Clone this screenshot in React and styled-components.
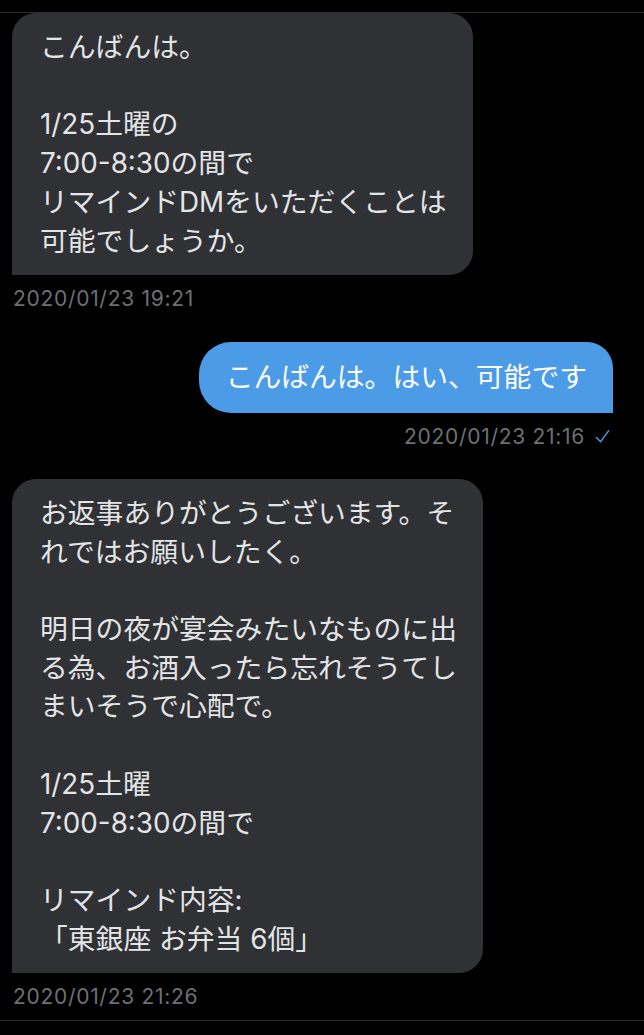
import styled, { createGlobalStyle } from 'styled-components';

const GlobalStyle = createGlobalStyle`
  html, body {
    margin: 0;
    background: #000;
  }
  body {
    font-family: Inter, "Noto Sans CJK JP", "Noto Sans", sans-serif;
  }
`;

const Page = styled.main`
  width: 644px;
  min-height: 1035px;
  background: #000;
`;

const TopBar = styled.header`
  height: 12px;
  border-bottom: 1px solid #2e2e30;
`;

const Thread = styled.section`
  display: flex;
  flex-direction: column;
  padding: 0 31px 10px 12px;
  border-bottom: 1px solid #2e2e30;
`;

const Message = styled.div`
  display: flex;
  flex-direction: column;
  align-items: ${({ $mine }) => ($mine ? 'flex-end' : 'flex-start')};
  margin-top: ${({ $gap }) => $gap}px;
`;

// latin runs take Inter, the japanese falls through to Noto CJK
const Bubble = styled.div`
  white-space: pre;
  font-family: Inter, "Noto Sans CJK JP", sans-serif;
  font-size: 27.8px;
  line-height: 38.7px;
  color: ${({ $mine }) => ($mine ? '#fbfdff' : '#e3e4e6')};
  background: ${({ $mine }) => ($mine ? '#4b9be7' : '#2f3135')};
  padding: ${({ $mine }) => ($mine ? '16px 26px 16px 27px' : '15px 26px 15px 28px')};
  border-radius: ${({ $mine }) => ($mine ? '32px 26px 0 32px' : '24px 24px 24px 0')};
`;

const Meta = styled.div`
  display: flex;
  align-items: center;
  gap: 10px;
  margin-top: 11px;
  padding-left: ${({ $mine }) => ($mine ? 0 : 1)}px;
  font-family: Inter, "Liberation Sans", sans-serif;
  font-size: 21px;
  line-height: 26px;
  letter-spacing: 0.7px;
  color: #6d7074;
`;

const Check = styled.svg`
  width: 15px;
  height: 15px;
  margin-right: 3px;
`;

const messages = [
  {
    id: 1,
    gap: 0,
    text: 'こんばんは。\n\n1/25土曜の\n7:00-8:30の間で\nリマインドDMをいただくことは\n可能でしょうか。',
    time: '2020/01/23 19:21',
  },
  {
    id: 2,
    gap: 30,
    mine: true,
    text: 'こんばんは。はい、可能です',
    time: '2020/01/23 21:16',
  },
  {
    id: 3,
    gap: 29,
    text:
      'お返事ありがとうございます。そ\nれではお願いしたく。\n\n明日の夜が宴会みたいなものに出\nる為、お酒入ったら忘れそうてし\nまいそうで心配で。\n\n1/25土曜\n7:00-8:30の間で\n\nリマインド内容:\n「東銀座 お弁当 6個」',
    time: '2020/01/23 21:26',
  },
];

export default function App() {
  return (
    <Page>
      <GlobalStyle />
      <TopBar />
      <Thread>
        {messages.map((m) => (
          <Message key={m.id} $mine={m.mine} $gap={m.gap}>
            <Bubble $mine={m.mine}>{m.text}</Bubble>
            <Meta $mine={m.mine}>
              <span>{m.time}</span>
              {m.mine && (
                <Check viewBox="0 0 16 16" fill="none">
                  <polyline
                    points="1.5,9 6,13.5 14.5,2"
                    stroke="#4b9be7"
                    strokeWidth="1.6"
                    strokeLinecap="round"
                    strokeLinejoin="round"
                  />
                </Check>
              )}
            </Meta>
          </Message>
        ))}
      </Thread>
    </Page>
  );
}
